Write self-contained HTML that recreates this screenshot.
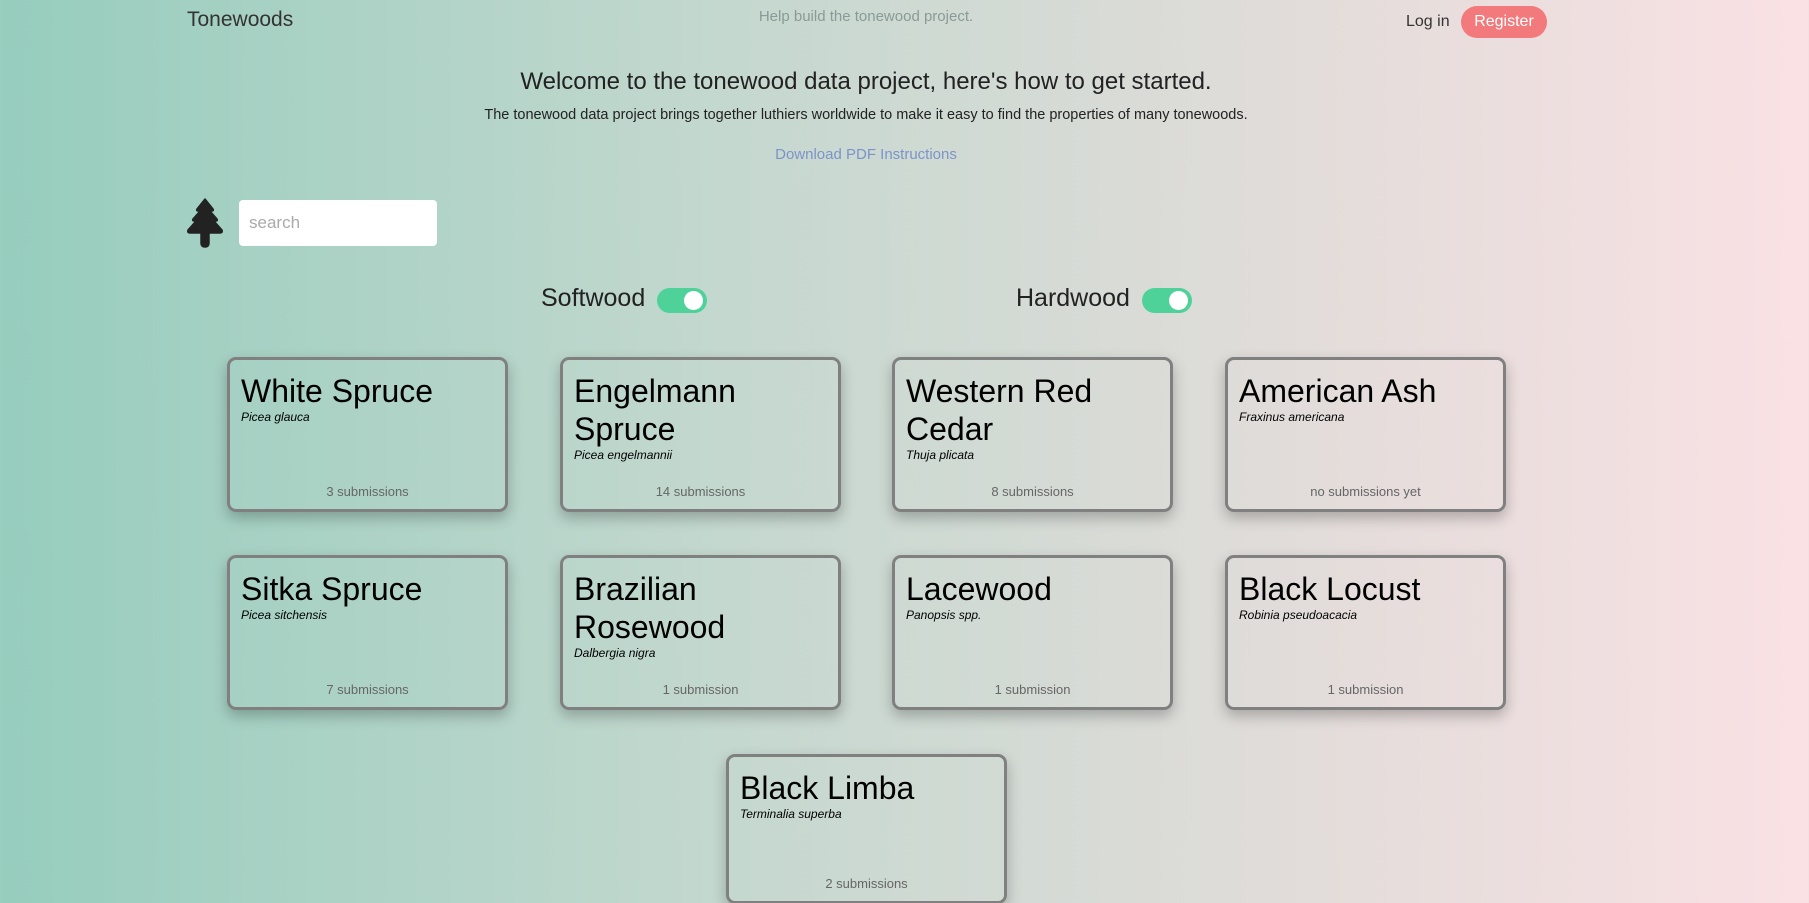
<!DOCTYPE html>
<html><head><meta charset="utf-8"><style>
*{box-sizing:border-box;margin:0;padding:0}
html,body{width:1809px;height:903px;overflow:hidden}
body{font-family:"Liberation Sans",sans-serif;background:linear-gradient(90deg,#96cdbd 0%,#c4d8cf 40%,#e0dcd9 70%,#fae1e4 100%);position:relative;color:#212529}
.abs{position:absolute}
.brand{left:187px;top:8px;font-size:21px;color:#333}
.tag{left:0;width:1732px;text-align:center;top:8px;font-size:15px;color:#8a9a96}
.login{left:1406px;top:13px;font-size:16px;color:#333}
.reg{left:1461px;top:6px;width:86px;height:32px;border-radius:16px;background:#f27a7c;color:#fff;font-size:16px;text-align:center;line-height:32px}
.h{left:0;width:1732px;text-align:center;top:68px;font-size:24px;color:#222}
.sub{left:0;width:1732px;text-align:center;top:107px;font-size:14.5px;color:#222}
.dl{left:0;width:1732px;text-align:center;top:146px;font-size:15px;color:#7d93c8}
.search{left:239px;top:200px;width:198px;height:46px;background:#fff;border-radius:4px;font-size:17px;color:#aaa;padding:13px 10px}
.lbl{font-size:25px;color:#222}
.tog{width:50px;height:25px;border-radius:13px;background:#4fd29a}
.tog::after{content:"";position:absolute;right:4px;top:3px;width:19px;height:19px;border-radius:50%;background:#fff}
.card{width:281px;height:155px;border:3px solid #808080;border-radius:9px;box-shadow:0 6px 14px rgba(0,0,0,.25);padding:12px 11px}
.card h2{font-weight:normal;font-size:32px;line-height:38px;color:#000}
.card i{display:block;font-size:12px;color:#000}
.card .s{position:absolute;left:0;right:0;bottom:10px;text-align:center;font-size:13px;color:#666}
</style></head><body>
<div class="abs brand">Tonewoods</div>
<div class="abs tag">Help build the tonewood project.</div>
<div class="abs login">Log in</div>
<div class="abs reg">Register</div>
<div class="abs h">Welcome to the tonewood data project, here's how to get started.</div>
<div class="abs sub">The tonewood data project brings together luthiers worldwide to make it easy to find the properties of many tonewoods.</div>
<div class="abs dl">Download PDF Instructions</div>
<svg class="abs" style="left:186px;top:198px" width="38" height="50" viewBox="0 0 38 50"><path d="M19 1 L27 11 Q28 13 26 13 L24 13 L31 21 Q32 23 30 23 L28 23 L36 32 Q37 35 34 35 L23 35 L23 45 Q23 49 19 49 Q15 49 15 45 L15 35 L4 35 Q1 35 2 32 L10 23 L8 23 Q6 23 7 21 L14 13 L12 13 Q10 13 11 11 Z" fill="#222" stroke="#222" stroke-width="1.5" stroke-linejoin="round"/></svg>
<div class="abs search">search</div>
<div class="abs lbl" style="left:541px;top:284px">Softwood</div>
<div class="abs tog" style="left:657px;top:288px"></div>
<div class="abs lbl" style="left:1016px;top:284px">Hardwood</div>
<div class="abs tog" style="left:1142px;top:288px"></div>

<div class="abs card" style="left:227px;top:357px"><h2>White Spruce</h2><i>Picea glauca</i><div class="s">3 submissions</div></div>
<div class="abs card" style="left:560px;top:357px"><h2>Engelmann Spruce</h2><i>Picea engelmannii</i><div class="s">14 submissions</div></div>
<div class="abs card" style="left:892px;top:357px"><h2>Western Red Cedar</h2><i>Thuja plicata</i><div class="s">8 submissions</div></div>
<div class="abs card" style="left:1225px;top:357px"><h2>American Ash</h2><i>Fraxinus americana</i><div class="s">no submissions yet</div></div>

<div class="abs card" style="left:227px;top:555px"><h2>Sitka Spruce</h2><i>Picea sitchensis</i><div class="s">7 submissions</div></div>
<div class="abs card" style="left:560px;top:555px"><h2>Brazilian Rosewood</h2><i>Dalbergia nigra</i><div class="s">1 submission</div></div>
<div class="abs card" style="left:892px;top:555px"><h2>Lacewood</h2><i>Panopsis spp.</i><div class="s">1 submission</div></div>
<div class="abs card" style="left:1225px;top:555px"><h2>Black Locust</h2><i>Robinia pseudoacacia</i><div class="s">1 submission</div></div>

<div class="abs card" style="left:726px;top:754px;height:150px"><h2>Black Limba</h2><i>Terminalia superba</i><div class="s">2 submissions</div></div>
</body></html>
